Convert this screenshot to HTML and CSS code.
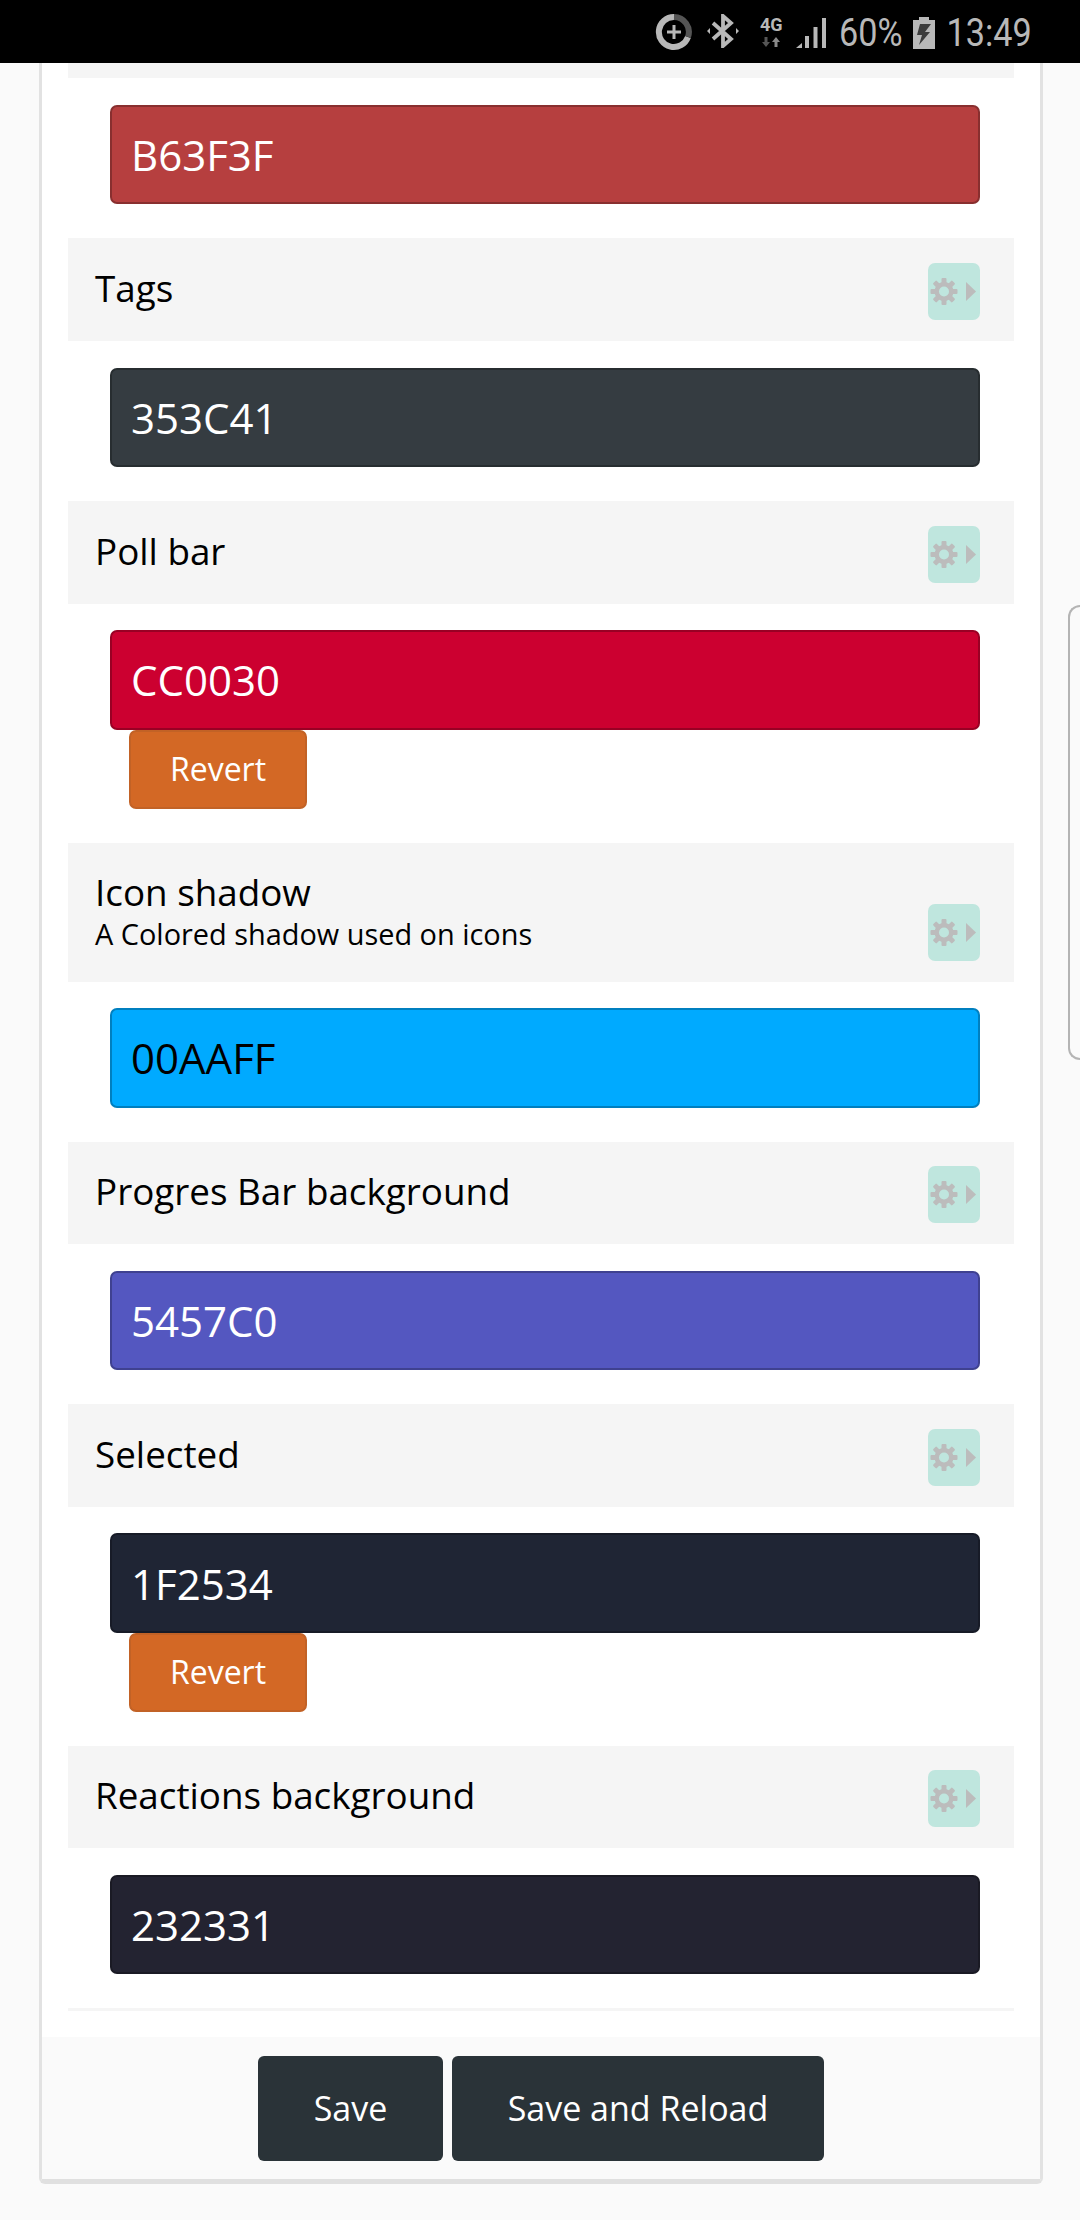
FILE: index.html
```html
<!DOCTYPE html>
<html lang="en">
<head>
<meta charset="utf-8">
<title>Theme colours</title>
<link rel="stylesheet" href="styles.css">
</head>
<body>
<svg class="defs" width="0" height="0" aria-hidden="true">
  <symbol id="cog" viewBox="0 0 52 57">
    <g fill="#bcbcbc">
      <path fill-rule="evenodd" d="M16 19a9.500 9.500 0 1 0 .01 0zM16 23.500a5 5 0 1 1-.01 0z"/>
      <rect x="13.500" y="15" width="5" height="27" rx="1"/>
      <rect x="13.500" y="15" width="5" height="27" rx="1" transform="rotate(45 16 28.500)"/>
      <rect x="13.500" y="15" width="5" height="27" rx="1" transform="rotate(90 16 28.500)"/>
      <rect x="13.500" y="15" width="5" height="27" rx="1" transform="rotate(135 16 28.500)"/>
      <circle cx="16" cy="28.500" r="5" fill="#bfe6de"/>
      <path d="M38 19l10 9.500-10 9.500z"/>
    </g>
  </symbol>
</svg>

<header class="status">
  <svg class="st-saver" width="38" height="38" viewBox="0 0 38 38">
    <path d="M19 4a15 15 0 1 0 14 20" fill="none" stroke="#b8b8b8" stroke-width="6"/>
    <path d="M19 4a15 15 0 0 1 14 20" fill="none" stroke="#555" stroke-width="6"/>
    <path d="M12 19h14M19 12v14" stroke="#b8b8b8" stroke-width="3"/>
  </svg>
  <svg class="st-bt" width="32" height="34" viewBox="0 0 32 34">
    <path d="M6 9l18 16-8 7V2l8 7L6 25" fill="none" stroke="#b8b8b8" stroke-width="3.800"/>
    <path d="M0 17l3-3v6zM32 17l-3-3v6z" fill="#b8b8b8"/>
  </svg>
  <div class="st-net">
    <span class="st-4g">4G</span>
    <svg width="20" height="12" viewBox="0 0 20 12">
      <path d="M5 11l-4-5h2.500V1h3v5H9z" fill="#555"/>
      <path d="M15 1l4 5h-2.500v5h-3V6H11z" fill="#8a8a8a"/>
    </svg>
  </div>
  <svg class="st-signal" width="32" height="32" viewBox="0 0 32 32">
    <path d="M1 31l6-5v5z" fill="#b8b8b8"/>
    <path d="M10 19h4v12h-4zM18.500 10h4v21h-4zM27 1h4v30h-4z" fill="#b8b8b8"/>
  </svg>
  <span class="st-text st-pct">60%</span>
  <svg class="st-batt" width="22" height="32" viewBox="0 0 22 32">
    <path d="M6 0h10v3h6v29H0V3h6z" fill="#b8b8b8"/>
    <path d="M7 7h11l-6 8h5L6 28l3-10H4z" fill="#3c3c3c"/>
  </svg>
  <span class="st-text st-time">13:49</span>
</header>

<main class="card">
  <div class="stub"></div>
  <div class="field"><div class="swatch swatch-light c-b63f3f">B63F3F</div></div>

  <section class="head"><div class="labels"><div class="label">Tags</div></div><svg class="cfg"><use href="#cog"/></svg></section>
  <div class="field"><div class="swatch swatch-light c-353c41">353C41</div></div>

  <section class="head"><div class="labels"><div class="label">Poll bar</div></div><svg class="cfg"><use href="#cog"/></svg></section>
  <div class="field"><div class="swatch swatch-light c-cc0030">CC0030</div><button class="revert">Revert</button></div>

  <section class="head head-tall"><div class="labels"><div class="label">Icon shadow</div><div class="sub">A Colored shadow used on icons</div></div><svg class="cfg"><use href="#cog"/></svg></section>
  <div class="field"><div class="swatch swatch-dark c-00aaff">00AAFF</div></div>

  <section class="head"><div class="labels"><div class="label">Progres Bar background</div></div><svg class="cfg"><use href="#cog"/></svg></section>
  <div class="field"><div class="swatch swatch-light c-5457c0">5457C0</div></div>

  <section class="head"><div class="labels"><div class="label">Selected</div></div><svg class="cfg"><use href="#cog"/></svg></section>
  <div class="field"><div class="swatch swatch-light c-1f2534">1F2534</div><button class="revert">Revert</button></div>

  <section class="head"><div class="labels"><div class="label">Reactions background</div></div><svg class="cfg"><use href="#cog"/></svg></section>
  <div class="field"><div class="swatch swatch-light c-232331">232331</div></div>

  <hr class="rule">

  <footer class="foot">
    <button class="action">Save</button>
    <button class="action action-wide">Save and Reload</button>
  </footer>
</main>

<aside class="edge"></aside>
</body>
</html>
```

FILE: styles.css
```css
* { box-sizing: border-box; }

html, body {
  margin: 0;
  padding: 0;
}

body {
  position: relative;
  width: 1080px;
  height: 2220px;
  overflow: hidden;
  background: #fafafa;
  font-family: "Open Sans", "Liberation Sans", sans-serif;
  color: #000;
}

.defs { position: absolute; }

/* status bar */
.status {
  height: 63px;
  background: #000;
  display: flex;
  align-items: center;
  justify-content: flex-end;
  padding-right: 48px;
  color: #b8b8b8;
}
.st-saver { margin-right: 14px; }
.st-bt { margin-right: 20px; margin-top: -1px; }
.st-net {
  width: 24px;
  display: flex;
  flex-direction: column;
  align-items: center;
  margin-right: 12px;
}
.st-net svg { display: block; margin-top: 2px; }
.st-4g {
  font-family: "Roboto", sans-serif;
  font-weight: 700;
  font-size: 18px;
  line-height: 19px;
}
.st-signal { margin-right: 12px; margin-top: 2px; }
.st-text {
  display: inline-block;
  font-family: "Roboto", sans-serif;
  font-size: 38px;
  line-height: 44px;
  margin-top: 2px;
  transform: scaleX(.9);
  transform-origin: right center;
}
.st-pct { margin-left: -7px; margin-right: 10px; }
.st-time { margin-left: -9.500px; }
.st-batt { margin-right: 12px; margin-top: 2px; }

/* card */
.card {
  width: 1004px;
  height: 2121px;
  margin-left: 39px;
  background: #fff;
  border-left: 3px solid #e2e2e2;
  border-right: 3px solid #e2e2e2;
  border-bottom: 5px solid #e0e0e0;
  border-radius: 0 0 6px 6px;
  padding: 0 26px 0;
  display: flex;
  flex-direction: column;
}
.stub { height: 15.400px; background: #f5f5f5; flex: none; }

.head {
  height: 102.600px;
  flex: none;
  background: #f5f5f5;
  padding: 0 34px 21px 27px;
  display: flex;
  justify-content: space-between;
  align-items: flex-end;
}
.head-tall { height: 139px; }

.labels {
  align-self: flex-start;
  margin-top: 26.700px;
}
.label {
  font-size: 36.800px;
  line-height: 46px;
}
.sub {
  font-size: 28.900px;
  line-height: 38px;
}
.cfg {
  width: 52px;
  height: 57px;
  background: #bfe6de;
  border-radius: 7px;
  flex: none;
}

.field {
  flex: none;
  padding: 26.600px 34px 33.900px 42px;
}
.swatch {
  height: 99.500px;
  border-radius: 7px;
  border: 2px solid rgba(0, 0, 0, .25);
  padding-left: 19px;
  font-size: 42px;
  display: flex;
  align-items: center;
}
.swatch-light { color: #fff; }
.swatch-dark { color: #000; }
.c-b63f3f { background: #b63f3f; }
.c-353c41 { background: #353c41; }
.c-cc0030 { background: #cc0030; }
.c-00aaff { background: #00aaff; }
.c-5457c0 { background: #5457c0; }
.c-1f2534 { background: #1f2534; }
.c-232331 { background: #232331; }

.revert {
  display: block;
  width: 178px;
  height: 79px;
  margin-left: 19px;
  padding: 0 0 2px;
  background: #d36825;
  border: 2px solid #c26226;
  border-radius: 7px;
  color: #fff;
  font-family: inherit;
  font-size: 32px;
}

.rule {
  width: 100%;
  height: 3px;
  margin: 0;
  border: 0;
  background: #f5f5f5;
  flex: none;
}

.foot {
  margin: 26px -26px 0;
  flex: 1;
  background: #fafafa;
  display: flex;
  justify-content: center;
  align-items: flex-start;
  gap: 9px;
  padding: 19px 0 0;
}
.action {
  width: 185px;
  height: 105px;
  padding: 0 0 2px;
  background: #2a3338;
  border: 0;
  border-radius: 6px;
  color: #fff;
  font-family: inherit;
  font-size: 34px;
}
.action-wide { width: 372px; }

/* edge panel handle, floats over the page */
.edge {
  position: absolute;
  top: 605px;
  right: 0;
  width: 12px;
  height: 455px;
  border: 2px solid #b4b4b4;
  border-right: 0;
  border-radius: 14px 0 0 14px;
}
```
